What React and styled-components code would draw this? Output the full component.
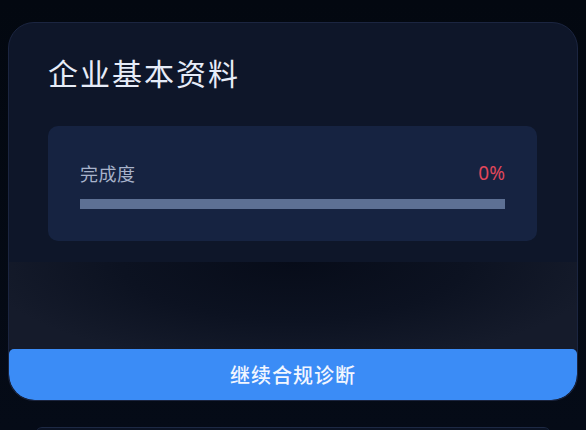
import React from "react";
import styled, { createGlobalStyle } from "styled-components";

const Global = createGlobalStyle`
  html, body {
    margin: 0;
    padding: 0;
    background: #040a15;
  }
  body {
    font-family: "Noto Sans CJK SC", "Noto Sans", sans-serif;
    overflow: hidden;
  }
`;

const Page = styled.div`
  width: 586px;
  height: 430px;
  box-sizing: border-box;
  padding: 22px 8px 0;
  display: flex;
  flex-direction: column;
  align-items: center;
  overflow: hidden;
  background: linear-gradient(#030810, #050b17);
`;

const Card = styled.div`
  width: 570px;
  flex-shrink: 0;
  box-sizing: border-box;
  display: flex;
  flex-direction: column;
  background: #0e1629;
  border: 1px solid #1b2540;
  border-radius: 26px;
  overflow: hidden;
`;

const Body = styled.div`
  display: flex;
  flex-direction: column;
  gap: 36px;
  padding: 31px 40px 0 39px;
`;

const Title = styled.h1`
  margin: 0;
  font-size: 30px;
  line-height: 36px;
  font-weight: 400;
  letter-spacing: 2px;
  color: #e6ecf8;
`;

const Panel = styled.div`
  display: flex;
  flex-direction: column;
  gap: 14px;
  padding: 35px 32px 32px;
  background: #162341;
  border-radius: 10px;
`;

const Row = styled.div`
  display: flex;
  justify-content: space-between;
  align-items: center;
  height: 24px;
`;

const Label = styled.span`
  font-size: 18px;
  letter-spacing: 0.5px;
  color: #a8b3cb;
`;

const Percent = styled.span`
  font-family: "Noto Sans", sans-serif;
  font-size: 19px;
  color: ${(p) => p.$color};
`;

const Track = styled.div`
  height: 10px;
  background: #5d7094;
  overflow: hidden;
`;

const Fill = styled.div`
  height: 100%;
  background: #3b8cf6;
`;

const Fade = styled.div`
  margin-top: 21px;
  height: 87px;
  background: radial-gradient(ellipse 55% 120% at 50% 0%, #070c19 0%, #0c1221 55%, #151b2b 100%);
`;

const Button = styled.button`
  height: 51px;
  flex-shrink: 0;
  border: none;
  border-radius: 5px 5px 26px 26px;
  background: #3b8cf6;
  color: #f2f6ff;
  font-family: "Noto Sans CJK SC", sans-serif;
  font-size: 20px;
  font-weight: 500;
  letter-spacing: 1px;
  cursor: pointer;
`;

const NextCard = styled.div`
  margin-top: 26px;
  width: 514px;
  height: 20px;
  flex-shrink: 0;
  border-top: 1px solid #1d2944;
  border-radius: 6px 6px 0 0;
  background: #0b1324;
`;

export default function App() {
  const progress = 0;
  return (
    <>
      <Global />
      <Page>
        <Card>
          <Body>
            <Title>企业基本资料</Title>
            <Panel>
              <Row>
                <Label>完成度</Label>
                <Percent $color="#e0475a">{progress}%</Percent>
              </Row>
              <Track>
                <Fill style={{ width: `${progress}%` }} />
              </Track>
            </Panel>
          </Body>
          <Fade />
          <Button>继续合规诊断</Button>
        </Card>
        <NextCard />
      </Page>
    </>
  );
}
